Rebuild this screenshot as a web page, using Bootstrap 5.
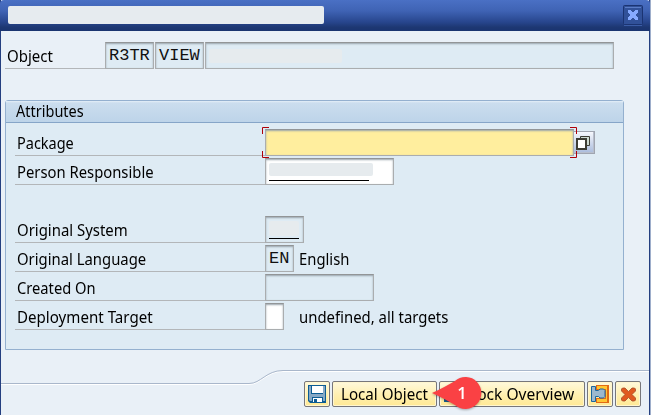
<!DOCTYPE html>
<html lang="en">
<head>
<meta charset="utf-8">
<meta name="viewport" content="width=device-width, initial-scale=1">
<title>Create Object Directory Entry</title>
<link href="https://cdn.jsdelivr.net/npm/bootstrap@5.3.0/dist/css/bootstrap.min.css" rel="stylesheet">
<style>
body{width:651px;height:415px;overflow:hidden;margin:0;background:#e9f0f7;color:#000;font:16px/20px "Noto Sans","Open Sans",sans-serif}
.dialog{width:650px;height:415px;border-left:1px solid #243f80;border-right:1px solid #243f80;background:#e9f0f7}
.edge{width:1px;height:415px;background:#9eaecb}
.titlebar{height:31px;margin:0 -1px;padding:0 7px 0 8px;border-radius:4px 4px 0 0;background:linear-gradient(#4a70c4,#3f63b4 35%,#27458c 72%,#1d3772 88%,#1a3470)}
.title-mask{width:316px;height:18px;margin-top:-1px;border-radius:2px;background:#e6ebef}
.content{padding:11px 0 0 4px}
.line{height:27px}
.lbl{height:27px;border-bottom:1px solid #b3b6b9;padding:4px 0 0 2px;white-space:nowrap}
.lbl-object{width:100px}
.lbl-attr{width:250px}
.t{display:inline-block;transform-origin:0 50%;white-space:nowrap}
.fld{height:27px;border:1px solid #aaadaf;border-top-color:#929597;box-shadow:inset 0 1px 2px #9aa5ad;background:#deebf4;color:#111;font:17px/25px "Courier New","Liberation Mono",monospace;padding-left:3px;white-space:nowrap}
.fld.edit{background:#fff}
.fld.active{background:#ffee9e}
.soft-mask{background:#e6ebee;border-radius:2px}
.panel{width:619px;height:250px;margin-top:31px;border:1px solid #94b0cf;background:#deebf4;border-radius:3px 3px 0 0}
.panel-head{height:22px;padding-left:10px;border-bottom:1px solid #86a5c8;background:linear-gradient(#e4eff8 0,#cbddee 2px,#bdd4e9);line-height:20px}
.panel-body{padding:6px 0 0 9px}
.rows{gap:2px}
.corners{position:absolute;left:-3px;top:-2px;width:315px;height:31px;pointer-events:none;z-index:2}
.f4{width:21px;height:23px;border:1px solid #a0a5b0;border-left:0;background:linear-gradient(#f6f8fd,#a9bbdc);box-shadow:inset -1px -1px #b8bfcd}
.after{padding:4px 0 0 5px}
.footer-line{display:block;width:648px;height:16px;margin-top:19px}
.footer-btns{padding:0 8px 0 0;gap:2px;margin-top:-4px;position:relative}
.sapbtn{height:26px;border:1px solid #77777b;border-radius:2px;background:linear-gradient(#fff9dc,#fff0b3 50%,#ffe995);box-shadow:inset 0 0 0 1px #fff6cf;padding:0;color:#000;font-size:16px;line-height:24px;white-space:nowrap;overflow:hidden;text-align:left}
.sq{width:26px}
.sapbtn svg{display:block;margin:auto}
.callout{position:absolute;left:431px;top:-4px;width:51px;height:34px;filter:drop-shadow(0 1px 1px rgba(0,0,0,.3))}
</style>
<script src="https://cdn.jsdelivr.net/npm/bootstrap@5.3.0/dist/js/bootstrap.bundle.min.js"></script>
</head>
<body class="d-flex">
<main class="dialog flex-shrink-0">
  <header class="titlebar d-flex align-items-center justify-content-between">
    <div class="title-mask"></div>
    <svg width="20" height="21" viewBox="0 0 20 21" aria-label="Close"><rect x=".5" y=".5" width="19" height="19" rx="1" fill="#315199" stroke="#1b3472"/><path d="M2 2.5h16" stroke="#5a7cc6"/><path d="M1 20.5h18" stroke="#3b5da7"/><path d="M5 5h3v1h1v1h2V6h1V5h3v3h-1v1h-1v2h1v1h1v3h-3v-1h-1v-1H9v1H8v1H5v-3h1v-1h1V9H6V8H5z" fill="#86aaff"/></svg>
  </header>

  <section class="content">
    <div class="line d-flex">
      <div class="lbl lbl-object"><span class="t" id="t0">Object</span></div>
      <div class="fld" style="width:49px">R3TR</div>
      <div class="fld" style="width:49px;margin-left:1px">VIEW</div>
      <div class="fld d-flex align-items-center" style="width:409px;margin-left:1px"><div class="soft-mask" style="width:133px;height:14px"></div></div>
    </div>

    <div class="panel">
      <div class="panel-head"><span class="t" id="t1">Attributes</span></div>
      <div class="panel-body d-flex flex-column rows">
        <div class="line d-flex">
          <div class="lbl lbl-attr"><span class="t" id="t2">Package</span></div>
          <div class="position-relative">
            <div class="fld active" style="width:309px"></div>
            <svg class="corners" viewBox="0 0 315 31" fill="none" stroke="#b00008"><path d="M.5 7V.5H7M308 .5h6.500V7M.5 24v6.500H7M308 30.500h6.500V24"/></svg>
          </div>
          <div class="f4 align-self-center"><svg class="d-block" width="20" height="21" viewBox="0 0 20 21"><path d="M6.500 4.500h9v9h-9z" fill="#cfdbd2" stroke="#3d3d35"/><path d="M3 7h9v10H3z" fill="#fff" stroke="#3d3d35" stroke-width="2"/></svg></div>
        </div>
        <div class="line d-flex">
          <div class="lbl lbl-attr"><span class="t" id="t3">Person Responsible</span></div>
          <div class="fld edit" style="width:129px"><div class="soft-mask mt-1" style="width:104px;height:13px"></div><div style="width:100px;height:1px;margin-top:4px;background:#000"></div></div>
        </div>
        <div class="line"></div>
        <div class="line d-flex">
          <div class="lbl lbl-attr"><span class="t" id="t4">Original System</span></div>
          <div class="fld" style="width:39px"><div class="soft-mask" style="width:30px;height:15px;margin-top:4px"></div><div style="width:30px;height:1px;margin-top:2px;background:#000"></div></div>
        </div>
        <div class="line d-flex">
          <div class="lbl lbl-attr"><span class="t" id="t5">Original Language</span></div>
          <div class="fld" style="width:29px">EN</div>
          <div class="after"><span class="t" id="t6">English</span></div>
        </div>
        <div class="line d-flex">
          <div class="lbl lbl-attr"><span class="t" id="t7">Created On</span></div>
          <div class="fld" style="width:109px"></div>
        </div>
        <div class="line d-flex">
          <div class="lbl lbl-attr"><span class="t" id="t8">Deployment Target</span></div>
          <div class="fld edit" style="width:19px"></div>
          <div class="after" style="margin-left:10px"><span class="t" id="t9">undefined, all targets</span></div>
        </div>
      </div>
    </div>
  </section>

  <svg class="footer-line" viewBox="0 0 648 16" fill="none"><path d="M0 15.500H248C260 15.500 265 2.500 282 2.500H648" stroke="#fff"/><path d="M0 14.500H248C260 14.500 265 1.500 282 1.500H648" stroke="#a9b7cb"/></svg>
  <footer class="footer-btns d-flex justify-content-end">
    <button class="sapbtn sq" aria-label="Save"><svg width="20" height="20" viewBox="0 0 20 20"><path d="M1 1h18v18H3l-2-2z" fill="#0c5c94"/><path d="M2 2h2v8h12V2h2v15h-2v-4H5v4H3l-1-1z" fill="#86a8c5"/><path d="M5 2h11v7H5zM6 14h9v4H6z" fill="#fff"/><path d="M7 15h3v3H7z" fill="#0c5c94"/></svg></button>
    <button class="sapbtn" style="width:105px;padding-left:8px"><span class="t" id="t10">Local Object</span></button>
    <button class="sapbtn d-flex" style="width:146px;padding-left:3px"><svg class="m-0 flex-shrink-0" width="20" height="24" viewBox="0 0 20 24"><path d="M1 17h14v3H1z" fill="#1b6290"/><path d="M3 16h8v2H3z" fill="#a8c2d5"/></svg><span class="t" id="t11" style="margin-left:6px">Lock Overview</span></button>
    <button class="sapbtn sq" aria-label="Connect"><svg width="20" height="20" viewBox="0 0 20 20"><path d="M6 1h13v18H6v-5h9V6H6z" fill="#e26a15"/><path d="M7 2h10v16H7v-3h9V5H7z" fill="#ffc632"/><path d="M1.500 2.500h4v4h3L10 5h3.500L15 6.500v6L13.500 14H10l-1.500-1.500h-3v5h-4z" fill="#9cb8cd" stroke="#1a659e"/></svg></button>
    <button class="sapbtn sq" aria-label="Cancel"><svg width="20" height="20" viewBox="0 0 20 20"><path d="M4.500 4h2.500l3.500 3.500L14 4h2.500l1 1v2L14 10.500l3.500 3.500v2l-1 1H14l-3.500-3.500L7 17H4.500l-1-1v-2L7 10.500 3.500 7V5z" fill="#e0591e" stroke="#a34b2c" stroke-width=".8"/></svg></button>
    <svg class="callout" viewBox="0 0 51 34"><path d="M0 16C9 12 16 8 23 4A15.900 15.900 0 1 1 23 28C16 24 9 20 0 16z" fill="#fa4144"/><text x="30" y="22" text-anchor="middle" font-family="Open Sans, sans-serif" font-size="16.500" font-weight="600" fill="#fff">1</text></svg>
  </footer>
</main>
<div class="edge"></div>
<script>
// Condense each caption to its dialog metrics, in pixels.
[46,68,57,137,111,129,50,79,136,149,87,105].forEach((w,i)=>{
  const e=document.getElementById('t'+i);
  e.style.transform='scaleX('+(w/e.offsetWidth)+')';
});
</script>
</body>
</html>
